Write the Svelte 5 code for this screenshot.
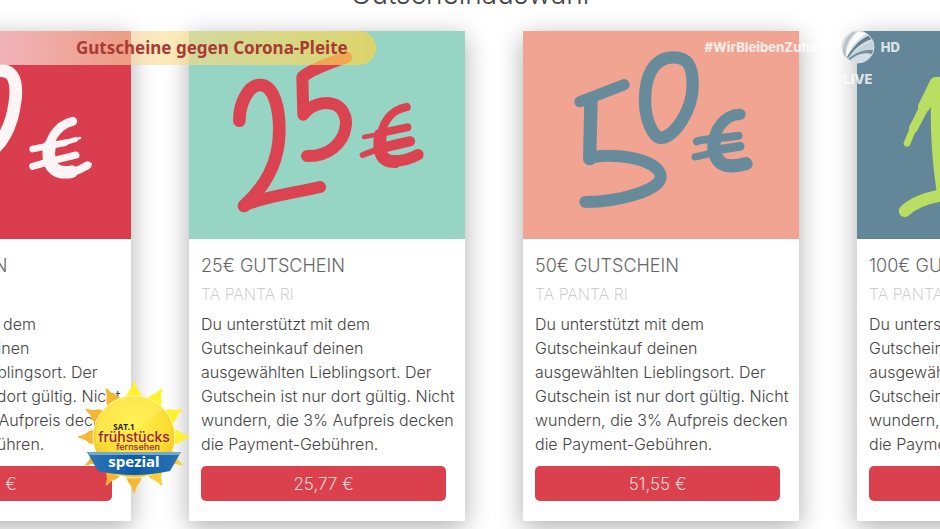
<script>
  const description =
    'Du unterstützt mit dem Gutscheinkauf deinen ausgewählten Lieblingsort. Der Gutschein ist nur dort gültig. Nicht wundern, die 3% Aufpreis decken die Payment-Gebühren.';

  // Brush lettering of each voucher: [path, stroke width]
  const vouchers = [
    {
      value: 10,
      price: '10,31 €',
      theme: 'red',
      viewBox: '-435 3 828 624',
      strokes: [
        ['M-250 230 L-180 170 L-200 480', 36],
        ['M0 122 C60 118 52 200 35 265 C20 315 0 345 -30 365 C-80 340 -60 130 0 122', 38],
        ['M218 274 C170 285 138 335 146 390', 27],
        ['M148 350 C138 420 175 432 215 425', 38],
        ['M205 428 C235 425 250 412 262 406', 24],
        ['M250 410 L272 402', 8],
        ['M98 357 L195 338', 20],
        ['M190 339 L226 329', 15],
        ['M220 329 L240 324', 8],
        ['M98 409 L150 394 L228 375', 21]
      ]
    },
    {
      value: 25,
      price: '25,77 €',
      theme: 'mint',
      viewBox: '27 3 828 624',
      strokes: [
        ['M178 272 C178 220 205 165 240 165 C280 165 298 230 298 300 C298 400 255 470 192 528', 38],
        ['M192 527 C250 500 340 490 420 471', 36],
        ['M498 82 C450 100 400 115 367 141 L370 254 C390 225 430 215 455 221 C490 228 502 265 497 290 C490 340 445 380 381 378', 36],
        ['M680 231 C630 240 600 285 603 335', 25],
        ['M601 320 C594 370 605 395 645 395', 38],
        ['M625 392 C670 396 690 385 714 374', 34],
        ['M552 321 L600 312', 13],
        ['M596 310 L682 292', 24],
        ['M548 375 L600 355', 18],
        ['M600 355 L690 334', 31]
      ]
    },
    {
      value: 50,
      price: '51,55 €',
      theme: 'salmon',
      viewBox: '39 3 828 624',
      strokes: [
        ['M210 215 L342 164', 34],
        ['M243 205 L239 386', 40],
        ['M240 386 C280 364 452 382 452 440 C452 480 330 516 226 516', 36],
        ['M490 82 C430 82 405 140 405 210 C405 270 430 324 454 324 C495 318 548 240 548 165 C548 110 535 82 490 82', 37],
        ['M690 253 C645 253 608 300 612 350', 34],
        ['M612 330 C608 405 645 418 708 401', 40],
        ['M561 334 C580 326 610 328 686 317', 24],
        ['M555 381 L620 366', 21],
        ['M605 362 L690 349', 27]
      ]
    },
    {
      value: 100,
      price: '103,09 €',
      theme: 'slate',
      viewBox: '501 93 828 624',
      strokes: [
        ['M651 430 L700 315', 20],
        ['M670 385 L712 305', 27],
        ['M702 320 L737 249', 36],
        ['M746 252 C740 400 750 490 762 575', 44],
        ['M644 633 C680 600 740 580 840 580', 36],
        ['M900 230 C820 230 820 440 890 440 C960 430 980 230 900 230', 36],
        ['M1050 200 C970 200 970 410 1040 410 C1110 400 1130 200 1050 200', 36],
        ['M1230 330 C1150 340 1140 490 1240 470', 30],
        ['M1130 400 L1220 380 M1130 440 L1230 415', 18]
      ]
    }
  ];

  const rays = Array.from({ length: 12 }, (_, i) => i * 30);

  function rayColor(angle) {
    if (angle < 120) return '#fff22d';
    return angle < 180 ? '#f8cf3b' : '#f5b634';
  }
</script>

<main class="shop">
  <h1>Gutscheinauswahl</h1>

  <div class="track">
    {#each vouchers as voucher}
      <article class="card">
        <div class="cover {voucher.theme}">
          <svg viewBox={voucher.viewBox} role="img" aria-label="{voucher.value} €">
            {#each voucher.strokes as [d, width]}
              <path {d} stroke-width={width} />
            {/each}
          </svg>
        </div>
        <div class="body">
          <h2>{voucher.value}€ GUTSCHEIN</h2>
          <h3>TA PANTA RI</h3>
          <p>{description}</p>
          <button type="button">{voucher.price}</button>
        </div>
      </article>
    {/each}
  </div>
</main>

<div class="banner">Gutscheine gegen Corona-Pleite</div>

<div class="channel">
  <span class="hashtag">#WirBleibenZuhause</span>
  <div class="logo">
    <svg class="ball" viewBox="0 0 34 34" aria-hidden="true">
      <defs>
        <clipPath id="ball-clip"><circle cx="17" cy="17" r="16" /></clipPath>
      </defs>
      <g clip-path="url(#ball-clip)">
        <circle cx="17" cy="17" r="16" fill="#d3dee5" />
        <path d="M3 27 C0 18 5 5 15 0 L17 0 C7 8 3 18 5 27 Z" fill="#b9bec1" />
        <path d="M5 27 C5 17 10 7 19 0 L26 3 C15 10 9 18 6 28 Z" fill="#fbfcfc" />
        <path d="M6 27 C12 17 19 9 29 5 L31 9 C21 12 13 19 7 28 Z" fill="#64808e" />
        <path d="M7 28 C15 20 23 13 33 11 L33 19 C24 18 15 22 8 29 Z" fill="#c5d3dc" />
        <path d="M7 29 C16 22 24 19 33 20 L31 24 C23 22 15 25 9 30 Z" fill="#758f9d" />
        <path d="M0 12 C2 19 2 23 6 27 L2 27 Z" fill="#999fa3" />
      </g>
      <circle cx="17" cy="17" r="16" fill="none" stroke="#d6dfe4" stroke-width="1" />
    </svg>
    <span>LIVE</span>
  </div>
  <span class="hd">HD</span>
</div>

<svg class="sun" viewBox="0 0 112 116" role="img" aria-label="SAT.1 frühstücksfernsehen spezial">
  <defs>
    <radialGradient id="sun-fill" cx="50%" cy="35%" r="65%">
      <stop offset="0" stop-color="#fff04a" />
      <stop offset="0.65" stop-color="#fbdc32" />
      <stop offset="1" stop-color="#efbd2d" />
    </radialGradient>
    <linearGradient id="ribbon-fill" x1="0" x2="1">
      <stop offset="0" stop-color="#2d78b8" />
      <stop offset="0.5" stop-color="#0b5ba8" />
      <stop offset="1" stop-color="#2d74b5" />
    </linearGradient>
  </defs>
  {#each rays as angle}
    <path
      d="M48 19 L50 13 Q54 9 55 3 Q56 1 57 3 Q58 9 62 13 L64 19 Z"
      fill={rayColor(angle)}
      transform="rotate({angle} 56 58)"
    />
  {/each}
  <circle cx="56" cy="58" r="41" fill="url(#sun-fill)" stroke="#fff6bd" stroke-width="1" />
  <path d="M18 64 C28 63 70 48 85 29 C69 9 38 12 25 32 C18 42 17 54 18 64 Z" fill="#fff46b" opacity="0.4" />
  <path d="M9 73 H103 L92 92 Q56 100 20 92 Z" fill="url(#ribbon-fill)" />
  <path d="M9 73 H103 L101 76 H12 Z" fill="#75a9ca" />
  <text class="sat" x="46" y="51">SAT.1</text>
  <text class="show" x="56" y="63">frühstücks</text>
  <text class="show-sub" x="60" y="71">fernsehen</text>
  <text class="special" x="56" y="88">spezial</text>
</svg>

<style>
  :global(body) {
    background: #fff;
    overflow: hidden;
  }

  .shop {
    overflow: hidden;
    padding-bottom: 16px;
    font-family: Inter, 'Liberation Sans', sans-serif;
    font-weight: 300;
    color: #444;
  }

  h1 {
    margin: -22px 0 21px;
    font-size: 28px;
    line-height: 32px;
    font-weight: 300;
    text-align: center;
  }

  .track {
    display: flex;
    gap: 58px;
    margin-left: -145px;
  }

  .card {
    flex: 0 0 276px;
    background: #fff;
    box-shadow: 0 6px 24px rgba(0, 0, 0, 0.32);
  }

  .cover svg {
    display: block;
    width: 100%;
    fill: none;
    stroke: currentColor;
    stroke-linecap: round;
    stroke-linejoin: round;
  }

  .red {
    background: #da3e4e;
    color: #fdf5f5;
  }

  .mint {
    background: #96d4c4;
    color: #dc4351;
  }

  .salmon {
    background: #f1a491;
    color: #688b9c;
  }

  .slate {
    background: #638798;
    color: #b9de61;
  }

  .body {
    padding: 13px 12px 20px;
  }

  h2,
  h3 {
    margin: 0;
    font-size: 18px;
    font-weight: 300;
    line-height: 28px;
  }

  h2 {
    color: #666;
  }

  h3 {
    font-size: 16px;
    font-weight: 200;
    color: #c4c4c4;
  }

  p {
    margin: 4px -8px 10px 0;
    font-size: 16px;
    line-height: 24px;
  }

  button {
    display: block;
    width: 245px;
    height: 35px;
    padding: 0;
    border: 0;
    border-radius: 5px;
    background: #da414d;
    color: #fbd5d6;
    font: inherit;
    font-size: 17px;
    cursor: pointer;
  }

  .banner {
    position: absolute;
    top: 31px;
    left: 0;
    box-sizing: border-box;
    padding: 0 28px 0 76px;
    border-radius: 0 17px 17px 0;
    background: linear-gradient(
      90deg,
      rgba(248, 218, 222, 0.75),
      rgba(248, 210, 170, 0.65) 30%,
      rgba(250, 222, 140, 0.6) 45%,
      rgba(250, 212, 70, 0.7)
    );
    color: #a83a34;
    font: bold 17px/34px 'Noto Sans', 'Open Sans', sans-serif;
    white-space: nowrap;
  }

  .channel {
    position: absolute;
    top: 30px;
    right: 40px;
    display: flex;
    align-items: flex-start;
    color: rgba(255, 255, 255, 0.8);
    font: 800 13px/34px Inter, sans-serif;
  }

  .logo {
    display: flex;
    flex-direction: column;
    align-items: center;
    width: 34px;
  }

  .logo span {
    line-height: 30px;
  }

  .ball {
    width: 34px;
    height: 34px;
  }

  .hd {
    margin-left: 6px;
  }

  .sun {
    position: absolute;
    top: 379px;
    left: 78px;
    width: 112px;
    height: 116px;
  }

  .sun text {
    text-anchor: middle;
    font-family: 'Open Sans', 'Noto Sans', sans-serif;
    font-weight: 700;
  }

  .sat {
    font-size: 8px;
    fill: #27200f;
  }

  .sun .show {
    font-family: Inter, sans-serif;
    font-size: 14px;
    font-weight: 500;
    fill: #96204b;
  }

  .sun .show-sub {
    font-family: Inter, sans-serif;
    font-size: 9px;
    font-weight: 500;
    fill: #96204b;
  }

  .special {
    font-size: 15px;
    fill: #fff;
  }
</style>
